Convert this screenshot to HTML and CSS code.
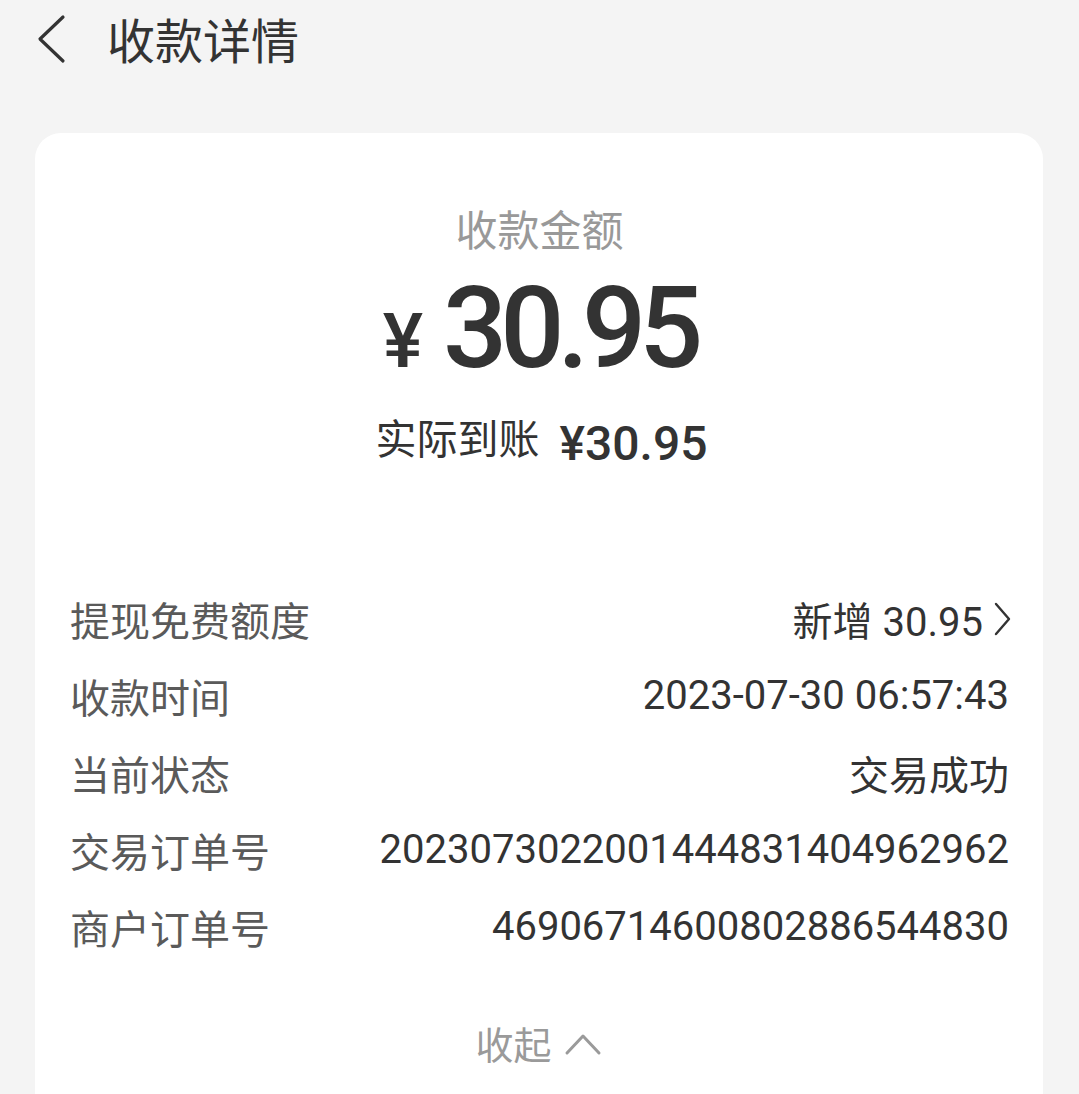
FILE: index.html
```html
<!DOCTYPE html>
<html lang="zh-CN">
<head>
<meta charset="utf-8">
<link rel="stylesheet" href="styles.css">
</head>
<body>
<header class="topbar">
  <svg class="back" width="30" height="50" viewBox="0 0 30 50"><path d="M27 3 L4 25 L27 47" fill="none" stroke="#333" stroke-width="3.2" stroke-linecap="round" stroke-linejoin="round"/></svg>
  <h1 class="title">收款详情</h1>
</header>
<main class="card">
  <div class="amount-label">收款金额</div>
  <div class="amount"><span class="yen">¥</span><span class="num">30.95</span></div>
  <div class="actual"><span class="actual-label">实际到账</span><span class="actual-num">¥30.95</span></div>
  <div class="rows">
    <div class="row"><span class="k">提现免费额度</span><span class="v">新增 30.95<svg class="chev" width="22" height="36" viewBox="0 0 22 36"><path d="M5 3 L18 18 L5 33" fill="none" stroke="#333" stroke-width="2.4" stroke-linecap="round" stroke-linejoin="round"/></svg></span></div>
    <div class="row"><span class="k">收款时间</span><span class="v">2023-07-30 06:57:43</span></div>
    <div class="row"><span class="k">当前状态</span><span class="v">交易成功</span></div>
    <div class="row"><span class="k">交易订单号</span><span class="v">2023073022001444831404962962</span></div>
    <div class="row"><span class="k">商户订单号</span><span class="v">46906714600802886544830</span></div>
  </div>
  <div class="collapse">收起<svg class="up" width="38" height="26" viewBox="0 0 38 26"><path d="M3 22 L19 5 L35 22" fill="none" stroke="#9a9a9a" stroke-width="3" stroke-linecap="round" stroke-linejoin="round"/></svg></div>
</main>
</body>
</html>
```
FILE: styles.css
```css
html, body {
  margin: 0;
  padding: 0;
  background: #f4f4f4;
  font-family: "Noto Sans CJK SC", "Noto Sans", sans-serif;
  color: #333;
}
.topbar {
  height: 76px;
  display: flex;
  align-items: center;
  padding-left: 36px;
}
.back {
  display: block;
  margin-top: 1px;
}
.title {
  margin: 0 0 0 41px;
  font-size: 48px;
  font-weight: 400;
  line-height: 76px;
  color: #333;
}
.card {
  margin: 57px 36px 0 35px;
  background: #fff;
  border-radius: 26px 26px 0 0;
  padding: 70px 34px 40px 35px;
  height: 1000px;
  box-sizing: border-box;
}
.amount-label {
  text-align: center;
  font-size: 42px;
  line-height: 50px;
  color: #999;
}
.amount {
  margin-top: 16px;
  height: 120px;
  display: flex;
  justify-content: center;
  align-items: baseline;
  line-height: 120px;
  font-family: Roboto, sans-serif;
  font-weight: 500;
  color: #333;
}
.yen {
  font-size: 76px;
  margin-right: 20px;
  margin-left: 0;
}
.num {
  font-size: 113px;
  letter-spacing: -7px;
}
.actual {
  margin-top: 23px;
  height: 60px;
  display: flex;
  justify-content: center;
  align-items: baseline;
  line-height: 60px;
  padding-left: 4px;
}
.actual-label {
  font-size: 41px;
  color: #333;
  margin-right: 20px;
  position: relative;
  top: -6px;
}
.actual-num {
  font-family: Roboto, sans-serif;
  font-weight: 500;
  font-size: 48px;
  color: #333;
}
.rows {
  margin-top: 108px;
}
.row {
  display: flex;
  justify-content: space-between;
  align-items: center;
  height: 77px;
}
.k {
  font-size: 40px;
  color: #5a5a5a;
}
.v {
  font-family: Roboto, "Noto Sans CJK SC", sans-serif;
  font-size: 40px;
  color: #333;
  display: flex;
  align-items: center;
}
.chev {
  display: block;
  margin-left: 8px;
  margin-right: -4px;
}
.collapse {
  margin-top: 48px;
  display: flex;
  justify-content: center;
  align-items: center;
  font-size: 38px;
  line-height: 60px;
  color: #9a9a9a;
  padding-right: 2px;
}
.up {
  display: block;
  margin-left: 12px;
  margin-top: 2px;
}
```
